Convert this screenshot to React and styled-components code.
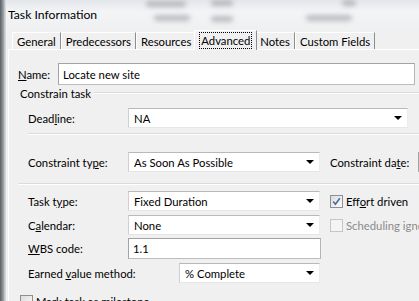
import React from 'react';
import styled, { createGlobalStyle } from 'styled-components';

const GlobalStyle = createGlobalStyle`
  html, body {
    margin: 0;
    padding: 0;
    background: #f0f0f0;
  }
  body {
    font-family: "Lato", "Liberation Sans", sans-serif;
    font-size: 11.3px;
    color: #000;
  }
`;

const Window = styled.div`
  width: 419px;
  height: 301px;
  display: flex;
  overflow: hidden;
`;

const LeftFrame = styled.div`
  width: 6px;
  flex: none;
  background: linear-gradient(to right, #5d6166 0, #7d8287 2px, #a9aeb3 4px, #d4d8dc 5px);
`;

const Main = styled.div`
  flex: 1;
  min-width: 0;
  display: flex;
  flex-direction: column;
`;

const TitleBar = styled.div`
  height: 29px;
  flex: none;
  position: relative;
  display: flex;
  align-items: center;
  padding-left: 2px;
  background: linear-gradient(to bottom, #e3e6e9, #f3f4f6 40%, #eef0f2);
  overflow: hidden;
`;

const Blur = styled.span`
  position: absolute;
  height: 6px;
  background: #8e9195;
  opacity: 0.55;
  filter: blur(2.5px);
  border-radius: 3px;
`;

const Title = styled.span`
  position: relative;
  font-size: 12.2px;
`;

const Client = styled.div`
  flex: 1;
  display: flex;
  flex-direction: column;
  background: #f0f0f0;
  padding-left: 2px;
`;

const TabStrip = styled.div`
  height: 20px;
  display: flex;
  align-items: flex-end;
  padding-left: 4px;
  position: relative;
  z-index: 1;
`;

const Tab = styled.div`
  height: ${p => (p.$active ? 20 : 17)}px;
  margin: 0 ${p => (p.$active ? '-2px' : '0')} ${p => (p.$active ? '-1px' : '0')};
  padding: 0 ${p => (p.$active ? 6 : 4)}px;
  display: flex;
  align-items: center;
  box-sizing: border-box;
  border-style: solid;
  border-width: 1px 1px 0 1px;
  border-color: #fff #8d8d8d transparent #fff;
  background: #f0f0f0;
  white-space: nowrap;
  z-index: ${p => (p.$active ? 2 : 0)};
`;

const Focus = styled.span`
  outline: 1px dotted #000;
  outline-offset: 1px;
`;

const Panel = styled.div`
  flex: 1;
  border-top: 1px solid #fff;
  border-left: 1px solid #fff;
  padding: 13px 0 0 9px;
  display: flex;
  flex-direction: column;
`;

const Row = styled.div`
  display: flex;
  align-items: center;
  flex: none;
  height: ${p => p.$h || 20}px;
  margin-top: ${p => p.$mt || 0}px;
  padding-left: ${p => p.$indent || 0}px;
  white-space: nowrap;
`;

const Label = styled.span`
  width: ${p => (p.$w ? `${p.$w}px` : 'auto')};
  flex: none;
  color: ${p => (p.$disabled ? '#8b8b8b' : '#000')};
`;

const Acc = styled.span`
  text-decoration: underline;
  text-underline-offset: 1px;
`;

const TextBox = styled.div`
  width: ${p => p.$w}px;
  height: 100%;
  flex: none;
  box-sizing: border-box;
  display: flex;
  align-items: center;
  padding-left: 4px;
  background: #fff;
  border: 1px solid;
  border-color: #a3a3a3 #b5b5b5 #bdbdbd #a3a3a3;
`;

const Combo = styled.div`
  width: ${p => p.$w}px;
  height: 100%;
  flex: none;
  box-sizing: border-box;
  display: flex;
  align-items: center;
  padding-left: 5px;
  background: #fff;
  border: 1px solid;
  border-color: #b9b9b9 #ececec #e6e6e6 #cfcfcf;
`;

const ComboText = styled.span`
  flex: 1;
`;

const Arrow = styled.span`
  width: 0;
  height: 0;
  margin-right: 5px;
  border-left: 4px solid transparent;
  border-right: 4px solid transparent;
  border-top: 4px solid #000;
`;

const GroupHeader = styled.div`
  display: flex;
  align-items: center;
  height: 14px;
  margin-top: 1px;
  padding-left: 2px;
  white-space: nowrap;
`;

const Rule = styled.div`
  flex: 1;
  height: 0;
  margin-left: 3px;
  border-top: 1px solid #d8dce0;
  border-bottom: 1px solid #fff;
`;

const Separator = styled.div`
  flex: none;
  height: 0;
  margin-top: ${p => p.$mt}px;
  margin-left: ${p => p.$indent || 0}px;
  border-top: 1px solid #d8dce0;
  border-bottom: 1px solid #fff;
`;

const Check = styled.span`
  width: 13px;
  height: 13px;
  box-sizing: border-box;
  flex: none;
  margin-right: 3px;
  border: 1px solid ${p => (p.$disabled ? '#c6c6c6' : '#8f8f8f')};
  background: ${p =>
    p.$disabled ? '#f4f4f4' : 'linear-gradient(135deg, #dcdcdc, #fbfbfb)'};
  display: flex;
  align-items: center;
  justify-content: center;
`;

const CheckMark = () => (
  <svg width="9" height="9" viewBox="0 0 9 9">
    <path d="M1.2 4.6 L3.4 7.2 L7.8 1.2" fill="none" stroke="#4b64a8" strokeWidth="1.5" />
  </svg>
);

const Gap = styled.span`
  width: ${p => p.$w}px;
  flex: none;
`;

const blobs = [
  { left: 140, top: 1, width: 40 },
  { left: 148, top: 15, width: 36 },
  { left: 205, top: 0, width: 22 },
  { left: 205, top: 16, width: 22 },
  { left: 300, top: 15, width: 46 },
  { left: 336, top: 0, width: 14 },
];

const tabs = ['General', 'Predecessors', 'Resources', 'Advanced', 'Notes', 'Custom Fields'];

export default function App() {
  return (
    <>
      <GlobalStyle />
      <Window>
        <LeftFrame />
        <Main>
          <TitleBar>
            {blobs.map((b, i) => (
              <Blur key={i} style={{ left: b.left, top: b.top, width: b.width }} />
            ))}
            <Title>Task Information</Title>
          </TitleBar>
          <Client>
            <TabStrip>
              {tabs.map(t =>
                t === 'Advanced' ? (
                  <Tab key={t} $active>
                    <Focus>{t}</Focus>
                  </Tab>
                ) : (
                  <Tab key={t}>{t}</Tab>
                )
              )}
            </TabStrip>
            <Panel>
              <Row $h={22}>
                <Label $w={40}>
                  <Acc>N</Acc>ame:
                </Label>
                <TextBox $w={357}>Locate new site</TextBox>
              </Row>

              <GroupHeader>
                Constrain task
                <Rule />
              </GroupHeader>

              <Row $mt={8} $indent={10}>
                <Label $w={100}>
                  Dead<Acc>l</Acc>ine:
                </Label>
                <Combo $w={280}>
                  <ComboText>NA</ComboText>
                  <Arrow />
                </Combo>
              </Row>
              <Separator $mt={5} $indent={10} />

              <Row $mt={17} $indent={10}>
                <Label $w={100}>
                  Constraint ty<Acc>p</Acc>e:
                </Label>
                <Combo $w={192}>
                  <ComboText>As Soon As Possible</ComboText>
                  <Arrow />
                </Combo>
                <Gap $w={10} />
                <Label $w={88}>
                  Constraint da<Acc>t</Acc>e:
                </Label>
                <TextBox $w={100} />
              </Row>
              <Separator $mt={11} />

              <Row $mt={6} $indent={10}>
                <Label $w={100}>
                  Task t<Acc>y</Acc>pe:
                </Label>
                <Combo $w={192}>
                  <ComboText>Fixed Duration</ComboText>
                  <Arrow />
                </Combo>
                <Gap $w={10} />
                <Check>
                  <CheckMark />
                </Check>
                <Label>
                  Eff<Acc>o</Acc>rt driven
                </Label>
              </Row>

              <Row $mt={4} $indent={10}>
                <Label $w={100}>
                  C<Acc>a</Acc>lendar:
                </Label>
                <Combo $w={192}>
                  <ComboText>None</ComboText>
                  <Arrow />
                </Combo>
                <Gap $w={10} />
                <Check $disabled />
                <Label $disabled>
                  Schedulin<Acc>g</Acc> ignores resource calendars
                </Label>
              </Row>

              <Row $mt={3} $h={21} $indent={10}>
                <Label $w={100}>
                  <Acc>W</Acc>BS code:
                </Label>
                <TextBox $w={193}>1.1</TextBox>
              </Row>

              <Row $mt={4} $indent={10}>
                <Label $w={151}>
                  Earned <Acc>v</Acc>alue method:
                </Label>
                <Combo $w={141}>
                  <ComboText>% Complete</ComboText>
                  <Arrow />
                </Combo>
              </Row>

              <Row $mt={12} $h={13} $indent={2}>
                <Check />
                <Label>
                  <Acc>M</Acc>ark task as milestone
                </Label>
              </Row>
            </Panel>
          </Client>
        </Main>
      </Window>
    </>
  );
}
